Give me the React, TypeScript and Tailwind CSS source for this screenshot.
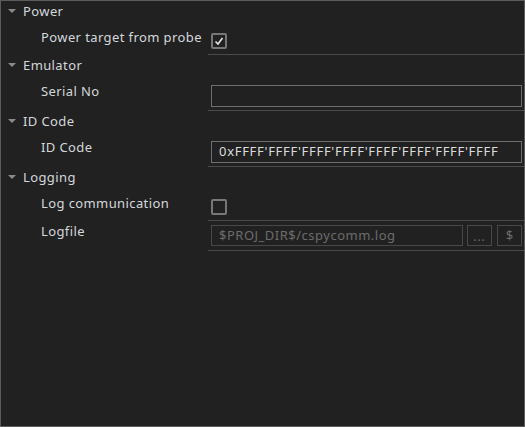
import React from 'react';

const FONT = { fontFamily: '"Noto Sans", "Open Sans", sans-serif' };

function Arrow() {
  return (
    <svg width="8" height="4" viewBox="0 0 8 4" className="mt-[8px] ml-[7px] mr-[7px] shrink-0">
      <path d="M0 0 H8 L4 4 Z" fill="#8a8a8a" />
    </svg>
  );
}

function Header({ title }: { title: string }) {
  return (
    <div className="flex h-[26px] items-start">
      <Arrow />
      <span className="text-[13px] leading-[20px] tracking-[0.4px] text-[#d4d8dc]">{title}</span>
    </div>
  );
}

function Checkbox({ checked }: { checked: boolean }) {
  return (
    <div className="mt-[6px] flex h-[16px] w-[16px] items-center justify-center rounded-[2px] border-2 border-[#777777]">
      {checked && (
        <svg width="10" height="10" viewBox="0 0 10 10">
          <path d="M1.5 5.5 L4 8 L8.5 2" fill="none" stroke="#e6e6e6" strokeWidth="1.6" />
        </svg>
      )}
    </div>
  );
}

function Row({ label, tall, children }: { label: string; tall?: boolean; children: React.ReactNode }) {
  return (
    <div className="grid grid-cols-[207px_1fr]">
      <div className="pl-[40px] text-[13px] leading-[20px] tracking-[0.4px] text-[#d4d8dc]">{label}</div>
      <div className={`border-b border-[#4a4a4a] pl-[3px] pr-[2px] ${tall ? 'h-[30px]' : 'h-[28px]'}`}>
        {children}
      </div>
    </div>
  );
}

export default function App() {
  return (
    <div style={FONT} className="h-[427px] w-[525px] border border-[#5c5c5c] bg-[#212121]">
      <Header title="Power" />
      <Row label="Power target from probe">
        <Checkbox checked />
      </Row>

      <Header title="Emulator" />
      <Row label="Serial No" tall>
        <div className="mt-[4px] h-[22px] border border-[#6e6e6e]" />
      </Row>

      <Header title="ID Code" />
      <Row label="ID Code" tall>
        <div className="mt-[4px] flex h-[22px] items-center border border-[#6e6e6e] pl-[7px] text-[13px] tracking-[0.7px] text-[#dcdcdc]">
          0xFFFF'FFFF'FFFF'FFFF'FFFF'FFFF'FFFF'FFFF
        </div>
      </Row>

      <Header title="Logging" />
      <Row label="Log communication">
        <Checkbox checked={false} />
      </Row>
      <Row label="Logfile" tall>
        <div className="mt-[4px] flex h-[21px] gap-[4px]">
          <div className="flex w-[252px] items-center border border-[#484848] pl-[7px] text-[13px] tracking-[0.5px] text-[#6c6c6c]">
            $PROJ_DIR$/cspycomm.log
          </div>
          <div className="flex w-[25px] items-end justify-center border border-[#484848] pb-[2px] text-[12px] leading-[12px] tracking-[1px] text-[#6c6c6c]">
            ...
          </div>
          <div className="ml-[1px] flex w-[25px] items-center justify-center border border-[#484848] text-[13px] text-[#6c6c6c]">
            $
          </div>
        </div>
      </Row>
    </div>
  );
}
